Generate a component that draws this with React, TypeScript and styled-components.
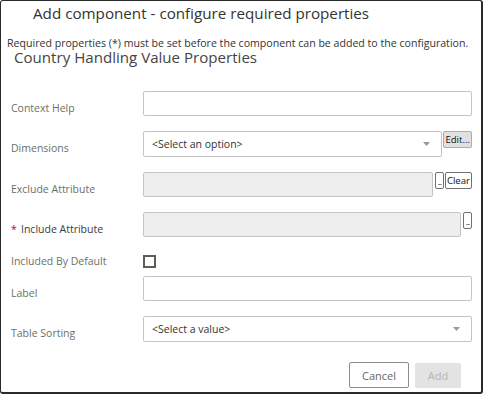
import styled, { createGlobalStyle } from 'styled-components';

const GlobalStyle = createGlobalStyle`
  html, body {
    margin: 0;
    padding: 0;
    background: #ffffff;
  }

  body {
    font-family: 'Open Sans', 'Noto Sans', sans-serif;
  }

  * {
    box-sizing: border-box;
  }
`;

const ArrowIcon = () => (
  <svg width="7" height="4" viewBox="0 0 7 4">
    <path d="M0 0 L7 0 L3.5 4 Z" fill="#9a9a9a" />
  </svg>
);

const App = () => {
  return (
    <>
      <GlobalStyle />
      <Dialog>
        <Title>Add component - configure required properties</Title>
        <Note>Required properties (*) must be set before the component can be added to the configuration.</Note>
        <SectionTitle>Country Handling Value Properties</SectionTitle>

        <Form>
          <Row>
            <Label>Context Help</Label>
            <Control>
              <TextInput />
            </Control>
          </Row>

          <Row $gap={15}>
            <Label>Dimensions</Label>
            <Control>
              <Select>
                <SelectText>&lt;Select an option&gt;</SelectText>
                <ArrowIcon />
              </Select>
              <SmallButton $variant="gray">Edit...</SmallButton>
            </Control>
          </Row>

          <Row $gap={15}>
            <Label>Exclude Attribute</Label>
            <Control>
              <TextInput $readOnly />
              <DotsButton>...</DotsButton>
              <SmallButton>Clear</SmallButton>
            </Control>
          </Row>

          <Row $gap={15}>
            <Label $required>
              <Star>*</Star>
              Include Attribute
            </Label>
            <Control>
              <TextInput $readOnly />
              <DotsButton>...</DotsButton>
            </Control>
          </Row>

          <CheckRow>
            <CheckLabel>Included By Default</CheckLabel>
            <Checkbox />
          </CheckRow>

          <Row $gap={5}>
            <Label>Label</Label>
            <Control>
              <TextInput />
            </Control>
          </Row>

          <Row $gap={15}>
            <Label>Table Sorting</Label>
            <Control>
              <Select>
                <SelectText>&lt;Select a value&gt;</SelectText>
                <ArrowIcon />
              </Select>
            </Control>
          </Row>
        </Form>

        <Footer>
          <FooterButton>Cancel</FooterButton>
          <FooterButton $disabled>Add</FooterButton>
        </Footer>
      </Dialog>
    </>
  );
};

const Dialog = styled.div`
  display: flex;
  flex-direction: column;
  width: 483px;
  height: 394px;
  background: #ffffff;
  border: 1px solid #2a2a2a;
  border-right-width: 2px;
  border-bottom-width: 2px;
  border-radius: 3px;
  color: #333333;
`;

const Title = styled.div`
  margin-top: 1px;
  padding-left: 32px;
  font-size: 15.2px;
  line-height: 22px;
  color: #333333;
`;

const Note = styled.div`
  margin-top: 14px;
  padding-left: 6px;
  font-size: 10.6px;
  line-height: 11px;
  color: #333333;
  white-space: nowrap;
`;

const SectionTitle = styled.div`
  margin-top: 1px;
  padding-left: 13px;
  font-size: 15.1px;
  line-height: 14px;
  color: #444444;
`;

const Form = styled.div`
  display: flex;
  flex-direction: column;
  padding: 27px 9px 0 10px;
`;

const Row = styled.div<{ $gap?: number }>`
  display: flex;
  align-items: flex-start;
  margin-top: ${({ $gap }) => $gap ?? 0}px;
`;

const Label = styled.div<{ $required?: boolean }>`
  flex: none;
  width: 132px;
  padding-top: 10px;
  font-size: 10.5px;
  line-height: 14px;
  color: ${({ $required }) => ($required ? '#3a3a3a' : '#6a6f66')};
`;

const Star = styled.span`
  display: inline-block;
  width: 10px;
  color: #d40000;
`;

const Control = styled.div`
  display: flex;
  flex: 1;
  align-items: flex-start;
  gap: 1px;
`;

const TextInput = styled.div<{ $readOnly?: boolean }>`
  flex: 1;
  height: 25px;
  border: 1px solid #c4c4c4;
  border-radius: 2px;
  background: ${({ $readOnly }) => ($readOnly ? '#eeeeee' : '#ffffff')};
`;

const Select = styled.div`
  display: flex;
  flex: 1;
  align-items: center;
  justify-content: space-between;
  height: 26px;
  padding: 0 11px 0 8px;
  border: 1px solid #c4c4c4;
  border-radius: 2px;
  background: #ffffff;
`;

const SelectText = styled.span`
  font-size: 10.5px;
  color: #333333;
`;

const SmallButton = styled.button<{ $variant?: 'gray' }>`
  flex: none;
  height: 17px;
  margin: 0;
  padding: 0 1px;
  border: 1px solid ${({ $variant }) => ($variant === 'gray' ? '#adadad' : '#707070')};
  border-radius: 2px;
  background: ${({ $variant }) => ($variant === 'gray' ? '#e1e1e1' : '#ffffff')};
  font-family: 'Open Sans', 'Noto Sans', sans-serif;
  font-size: 9.6px;
  line-height: 14px;
  color: #111111;
`;

const DotsButton = styled.button`
  display: flex;
  flex: none;
  align-items: flex-end;
  justify-content: center;
  width: 9px;
  height: 17px;
  margin: 0 0 0 1px;
  padding: 0 0 2px;
  border: 1px solid #707070;
  border-radius: 2px;
  background: #ffffff;
  font-family: 'Open Sans', 'Noto Sans', sans-serif;
  font-size: 8px;
  line-height: 8px;
  letter-spacing: -1px;
  color: #111111;
  overflow: hidden;
`;

const CheckRow = styled.div`
  display: flex;
  align-items: center;
  height: 20px;
  margin-top: 14px;
`;

const CheckLabel = styled.div`
  flex: none;
  width: 132px;
  font-size: 10.5px;
  line-height: 14px;
  color: #6a6f66;
`;

const Checkbox = styled.div`
  width: 13px;
  height: 13px;
  border: 2px solid #5a5f57;
  background: #ffffff;
`;

const Footer = styled.div`
  display: flex;
  justify-content: flex-end;
  align-items: flex-start;
  gap: 6px;
  margin-top: 20px;
  padding-right: 20px;
`;

const FooterButton = styled.button<{ $disabled?: boolean }>`
  height: ${({ $disabled }) => ($disabled ? '25px' : '26px')};
  margin-top: ${({ $disabled }) => ($disabled ? '1px' : '0')};
  padding: 0;
  width: ${({ $disabled }) => ($disabled ? '46px' : '60px')};
  border: ${({ $disabled }) => ($disabled ? 'none' : '1px solid #8c8c8c')};
  border-radius: 2px;
  background: ${({ $disabled }) => ($disabled ? '#e3e3e3' : '#ffffff')};
  font-family: 'Open Sans', 'Noto Sans', sans-serif;
  font-size: 11px;
  color: ${({ $disabled }) => ($disabled ? '#b5b5b5' : '#666666')};
`;

export default App;
